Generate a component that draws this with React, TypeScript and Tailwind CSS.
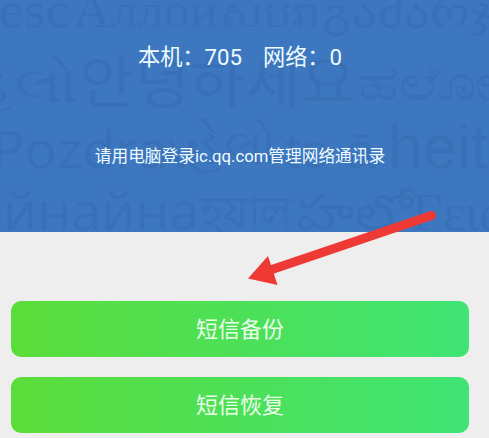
const han = 'font-[Roboto,"Noto_Sans_CJK_SC",sans-serif]';

type Word = { text: string; x: number; y: number; size: number; width: number; family: string };

const serif = '"Liberation Serif", "Noto Sans CJK SC", serif';
const sans = '"Open Sans", "Noto Sans", "Noto Sans CJK KR", sans-serif';

const greetings: Word[] = [
  { text: "esc", x: -1, y: 27, size: 50, width: 71, family: serif },
  { text: "Аллой", x: 73, y: 27, size: 48, width: 145, family: serif },
  { text: "សំបរា", x: 220, y: 27, size: 36, width: 100, family: serif },
  { text: "გამარჯ", x: 322, y: 27, size: 40, width: 171, family: '"DejaVu Sans", sans-serif' },
  { text: "હેલો", x: -32, y: 103, size: 52, width: 110, family: sans },
  { text: "안녕하세요", x: 79, y: 103, size: 57, width: 277, family: '"Noto Sans CJK KR", sans-serif' },
  { text: "ಹಲೋ", x: 358, y: 100, size: 50, width: 135, family: sans },
  { text: "Pozdrav", x: -8, y: 168, size: 52, width: 203, family: sans },
  { text: "હેલો", x: 186, y: 164, size: 50, width: 92, family: sans },
  { text: "to ā", x: 285, y: 168, size: 49, width: 91, family: '"Liberation Sans", sans-serif' },
  { text: "heit", x: 388, y: 168, size: 62, width: 100, family: '"Liberation Sans", sans-serif' },
  { text: "йнайна", x: 3, y: 230, size: 51, width: 196, family: sans },
  { text: "হযাল", x: 200, y: 230, size: 48, width: 93, family: sans },
  { text: "హలో", x: 296, y: 230, size: 50, width: 116, family: sans },
  { text: "Γεια", x: 412, y: 230, size: 52, width: 95, family: serif },
];

function GreetingPattern() {
  return (
    <svg className="absolute inset-0 h-full w-full" viewBox="0 0 489 232" fill="#3971b7" aria-hidden="true">
      {greetings.map((w, i) => (
        <text
          key={i}
          x={w.x}
          y={w.y}
          fontSize={w.size}
          fontFamily={w.family}
          textLength={w.width}
          lengthAdjust="spacingAndGlyphs"
        >
          {w.text}
        </text>
      ))}
    </svg>
  );
}

function ActionButton({ label }: { label: string }) {
  return (
    <button
      className={`flex h-14 w-full items-center justify-center rounded-[10px] bg-linear-to-r from-[#5bdd38] via-[#4ce057] to-[#3fe474] pt-px text-[22px] text-[#eaffea] ${han}`}
    >
      {label}
    </button>
  );
}

export default function App() {
  return (
    <main className={`relative h-[438px] w-[489px] overflow-hidden bg-[#eeeeee] ${han}`}>
      <header className="relative h-[232px] overflow-hidden bg-[#3d77c0]">
        <GreetingPattern />
        <div className="relative flex flex-col items-center pr-[9px] pt-[42px] text-[#eefcff]">
          <div className="flex h-8 items-center gap-[21px] whitespace-nowrap text-[22.2px]">
            <span>本机：705</span>
            <span>网络：0</span>
          </div>
          <p className="mt-[71px] whitespace-nowrap text-[16.7px] leading-6">请用电脑登录ic.qq.com管理网络通讯录</p>
        </div>
      </header>
      <section className="flex flex-col gap-5 pl-[11px] pr-5 pt-[69px]">
        <ActionButton label="短信备份" />
        <ActionButton label="短信恢复" />
      </section>
      <svg className="absolute left-0 top-0" width="489" height="438" viewBox="0 0 489 438" aria-hidden="true">
        <path d="M431.500 215.500L272 269.500" stroke="#ee3935" strokeWidth="9" strokeLinecap="round" />
        <path d="M248 278.500L268 256L277.500 285Z" fill="#ee3935" />
      </svg>
    </main>
  );
}
